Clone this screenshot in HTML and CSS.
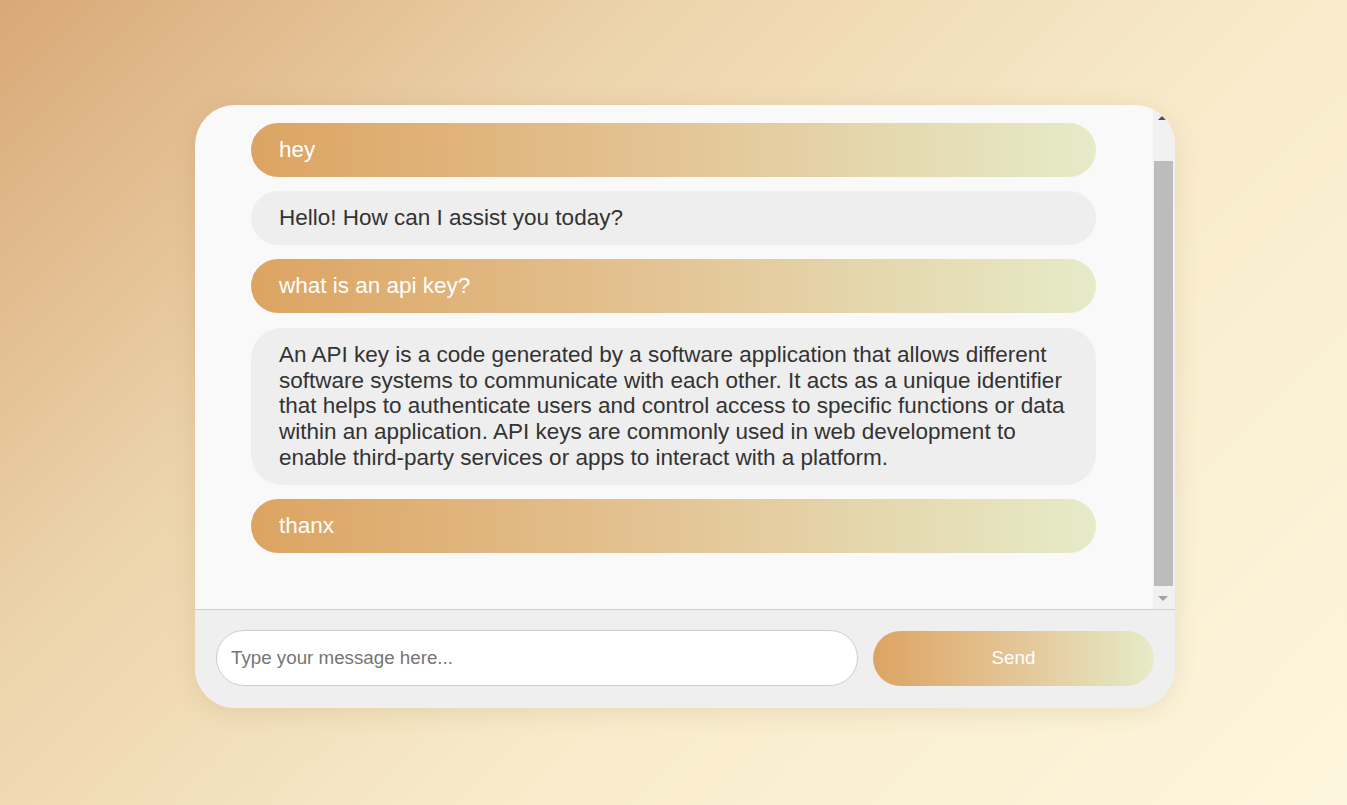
FILE: index.html
```html
<!DOCTYPE html>
<html lang="en">
<head>
<meta charset="utf-8">
<title>Chat</title>
<link rel="stylesheet" href="styles.css">
</head>
<body>
<div class="chat">
  <div class="chat-log">
    <div class="chat-scroll">
      <div class="chat-inner">
        <div class="msg user">hey</div>
        <div class="msg bot">Hello! How can I assist you today?</div>
        <div class="msg user">what is an api key?</div>
        <div class="msg bot">An API key is a code generated by a software application that allows different software systems to communicate with each other. It acts as a unique identifier that helps to authenticate users and control access to specific functions or data within an application. API keys are commonly used in web development to enable third-party services or apps to interact with a platform.</div>
        <div class="msg user">thanx</div>
      </div>
    </div>
    <div class="scrollbar" aria-hidden="true">
      <div class="sb-btn sb-up">
        <svg width="8" height="4" viewBox="0 0 8 4"><polygon points="0,4 8,4 4,0" fill="#505050"/></svg>
      </div>
      <div class="sb-track"><div class="sb-thumb"></div></div>
      <div class="sb-btn sb-down">
        <svg width="10" height="5" viewBox="0 0 10 5"><polygon points="0,0 10,0 5,5" fill="#a3a3a3"/></svg>
      </div>
    </div>
  </div>
  <div class="chat-input">
    <input class="text-input" type="text" placeholder="Type your message here..." autofocus>
    <button class="send-btn" type="button">Send</button>
  </div>
</div>
</body>
</html>
```

FILE: styles.css
```css
* { box-sizing: border-box; }

html, body {
  margin: 0;
  height: 100%;
}

body {
  font-family: "Liberation Sans", Arial, sans-serif;
  background: linear-gradient(135deg, #d9a877 0%, #ecd3ab 30%, #f8ebca 60%, #fdf6de 100%);
  padding: 105px 0 0 195px;
}

.chat {
  width: 980px;
  height: 603px;
  border-radius: 40px;
  overflow: hidden;
  background: #f9f9f9;
  box-shadow: 0 4px 24px rgba(120, 80, 30, 0.12);
  display: flex;
  flex-direction: column;
}

.chat-log {
  height: 505px;
  flex: none;
  display: flex;
  border-bottom: 1px solid #d0d0d0;
}

.chat-scroll {
  flex: 1;
  min-width: 0;
  overflow: hidden;
  display: flex;
  flex-direction: column;
  justify-content: flex-end;
}

.chat-inner {
  display: flex;
  flex-direction: column;
  gap: 14.5px;
  padding: 0 57px 56px 56px;
}

.msg {
  font-size: 22.5px;
  line-height: 25.8px;
  padding: 14px 28px;
  border-radius: 31px;
}

.msg.user {
  color: #ffffff;
  background: linear-gradient(to right, #dca462 0%, #e3c190 45%, #e6ebc8 100%);
}

.msg.bot {
  color: #333333;
  background: #eeeeee;
}

/* decorative scrollbar (thumb at the bottom: log is scrolled to the end) */
.scrollbar {
  width: 22px;
  flex: none;
  background: #f1f1f1;
  display: flex;
  flex-direction: column;
}

.sb-btn {
  height: 21px;
  flex: none;
  display: flex;
  justify-content: center;
}

.sb-up {
  align-items: flex-end;
  padding: 0 4px 6px 0;
}

.sb-down {
  align-items: center;
  padding-right: 2px;
}

.sb-track {
  flex: 1;
  display: flex;
  padding: 35px 2px 2px 1px;
}

.sb-thumb {
  flex: 1;
  background: #bcbcbc;
}

.chat-input {
  flex: 1;
  background: #efefef;
  display: flex;
  align-items: center;
  gap: 15px;
  padding: 0 21px 2px;
}

.text-input {
  flex: 1;
  height: 56px;
  border: 1px solid #cccccc;
  border-radius: 28px;
  background: #ffffff;
  padding: 0 14px;
  font-family: "Liberation Sans", Arial, sans-serif;
  font-size: 18.75px;
  color: #333;
  outline: none;
}

.text-input::placeholder {
  color: #757575;
}

.send-btn {
  width: 281px;
  height: 55px;
  flex: none;
  border: none;
  border-radius: 28px;
  background: linear-gradient(to right, #dca462 0%, #e3c190 45%, #e6ebc8 100%);
  color: #ffffff;
  font-family: "Liberation Sans", Arial, sans-serif;
  font-size: 18.75px;
  cursor: pointer;
}
```
